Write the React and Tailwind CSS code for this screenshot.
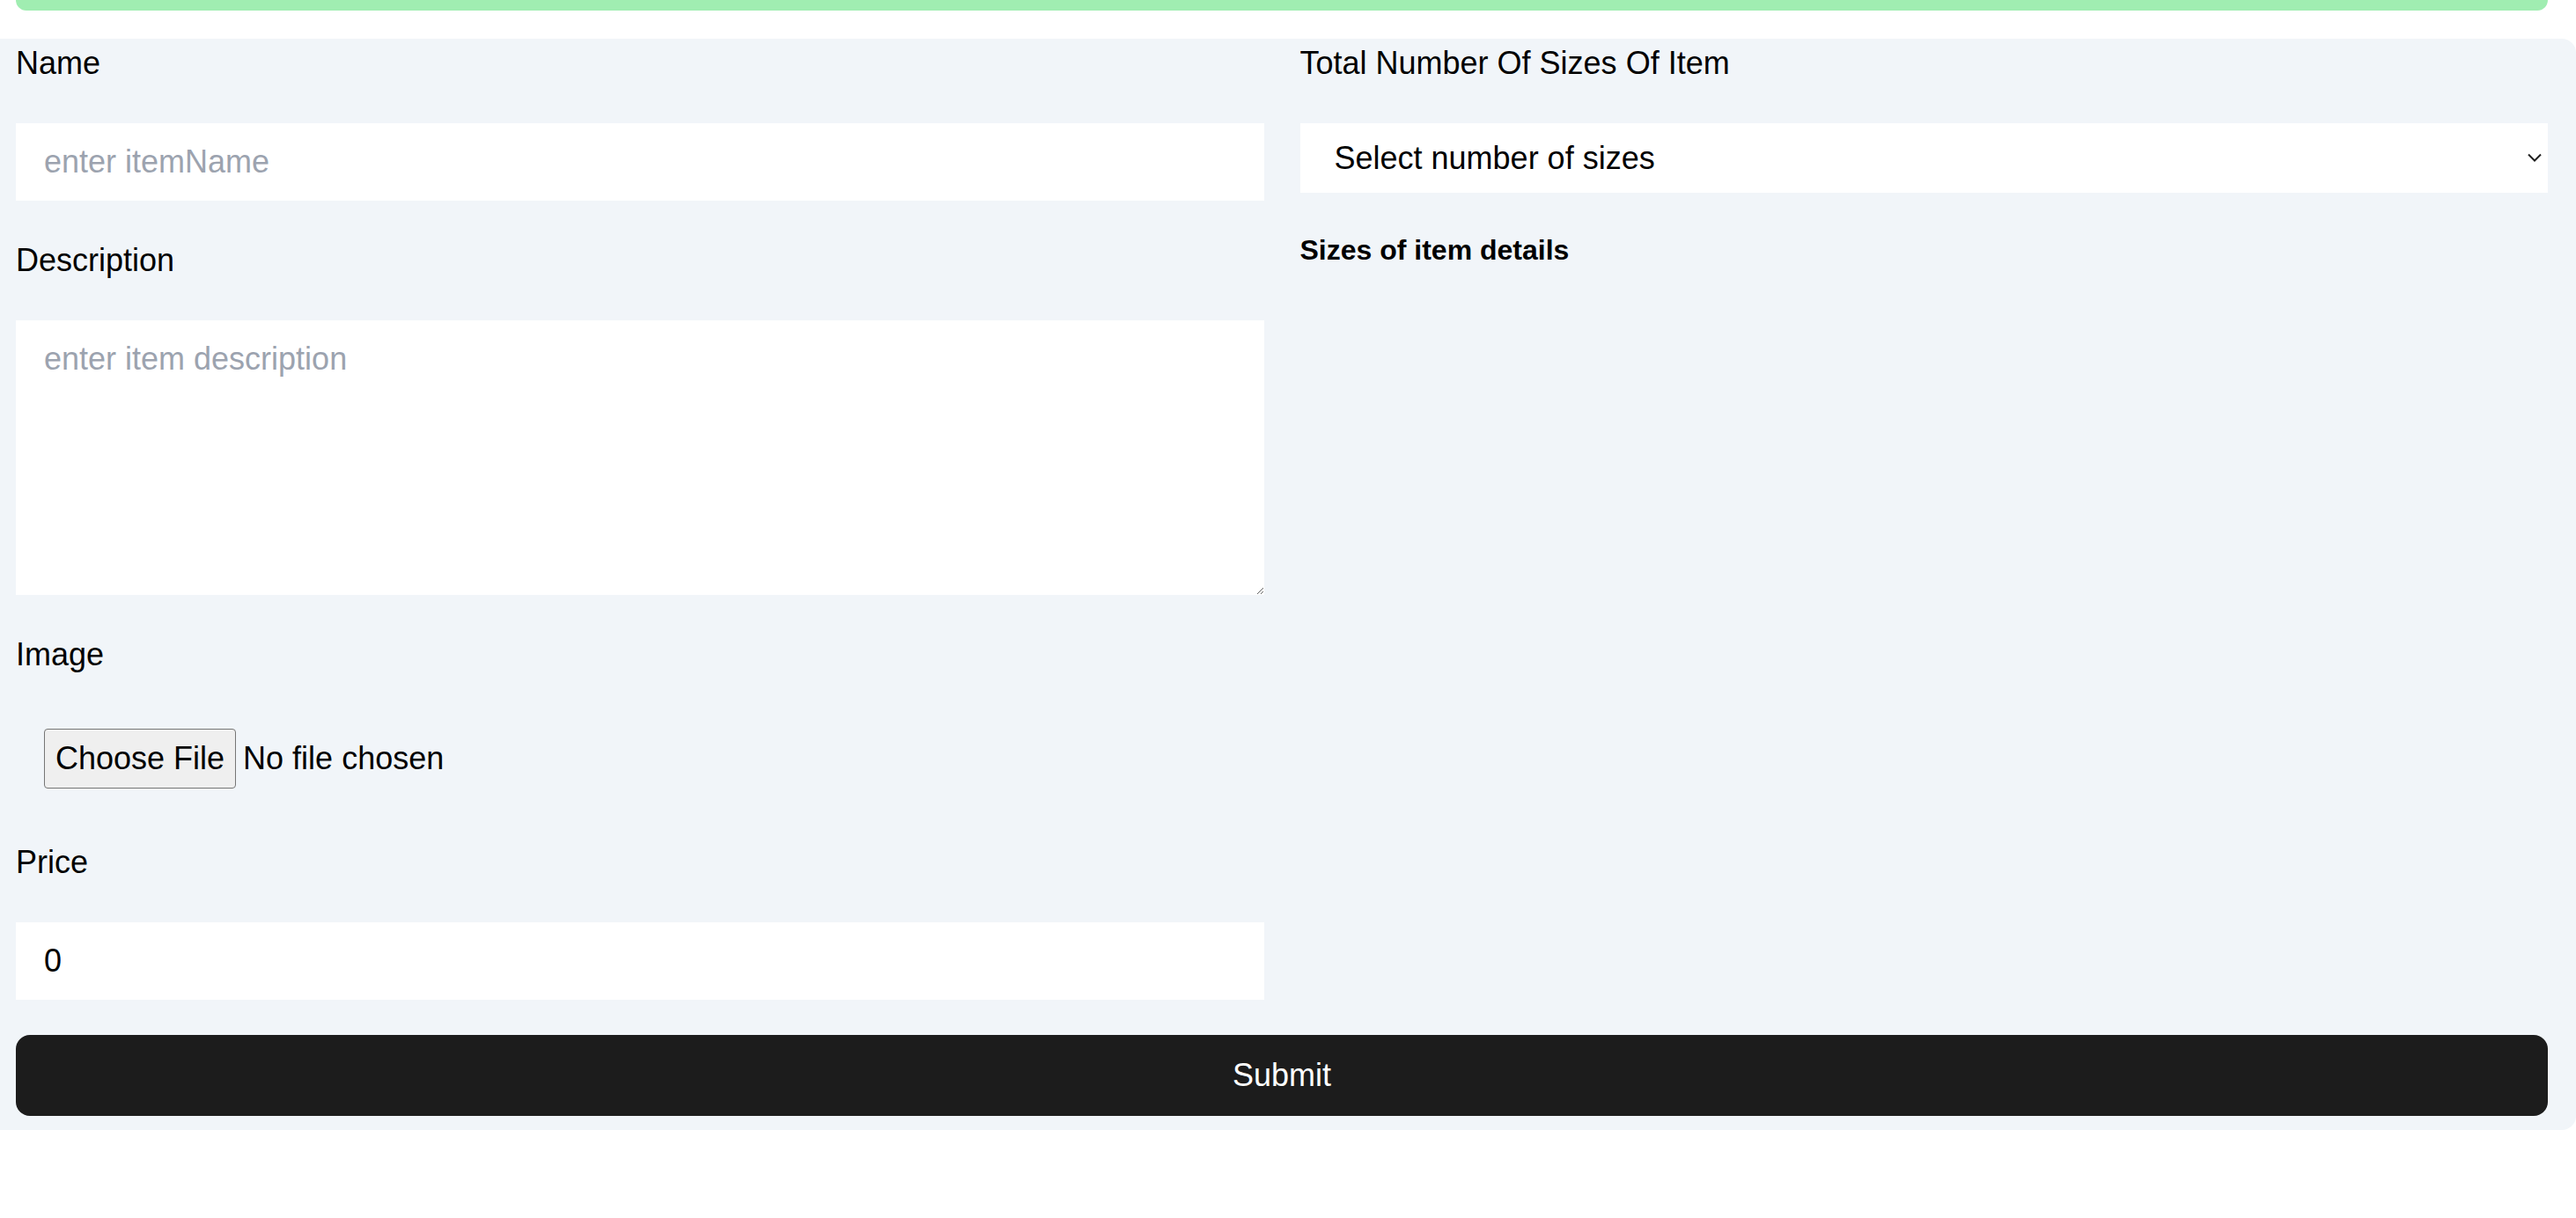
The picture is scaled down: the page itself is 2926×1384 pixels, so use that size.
import React from 'react';

const Field = ({ label, children, className = '' }) => {
    return (
        <div className={className}>
            <label className="block text-[36px] leading-[56px] text-black">{label}</label>
            <div className="mt-[40px]">{children}</div>
        </div>
    );
};

const App = () => {
    return (
        <div className="min-h-screen bg-white font-['Liberation_Sans',Arial,sans-serif]">
            {/* top progress bar */}
            <div className="ml-[18px] mr-[32px] h-[12px] rounded-b-[16px] bg-[#a0edb1]"></div>

            <form className="mt-[32px] rounded-r-[16px] bg-[#f1f5f9] pl-[18px] pr-[32px] pb-[16px]">
                <div className="grid grid-cols-2 gap-x-[41px]">
                    {/* left column */}
                    <div className="flex flex-col gap-[40px]">
                        <Field label="Name">
                            <input
                                type="text"
                                placeholder="enter itemName"
                                className="block h-[88px] w-full bg-white px-[32px] text-[36px] leading-[56px] text-black outline-none placeholder:text-[#9ca3af]"
                            />
                        </Field>

                        <Field label="Description">
                            <textarea
                                placeholder="enter item description"
                                className="block h-[312px] w-full bg-white px-[32px] py-[16px] text-[36px] leading-[56px] text-black outline-none placeholder:text-[#9ca3af]"
                            ></textarea>
                        </Field>

                        <Field label="Image">
                            <div className="px-[32px] py-[16px]">
                                <input
                                    type="file"
                                    className="block h-[68px] text-[36px] leading-[68px] text-black file:mr-[8px] file:h-[68px] file:cursor-pointer file:rounded-[4px] file:border file:border-solid file:border-[#767676] file:bg-[#efefef] file:px-[12px] file:text-[36px] file:leading-[42px] file:text-black"
                                />
                            </div>
                        </Field>

                        <Field label="Price">
                            <input
                                type="number"
                                defaultValue={0}
                                className="block h-[88px] w-full bg-white px-[32px] text-[36px] leading-[56px] text-black outline-none"
                            />
                        </Field>
                    </div>

                    {/* right column */}
                    <div>
                        <Field label="Total Number Of Sizes Of Item">
                            <div className="relative">
                                <select
                                    defaultValue=""
                                    className="block h-[79px] w-full appearance-none bg-white pl-[39px] pr-[48px] text-[36px] text-black outline-none"
                                >
                                    <option value="" disabled>Select number of sizes</option>
                                    <option value="1">1</option>
                                    <option value="2">2</option>
                                    <option value="3">3</option>
                                    <option value="4">4</option>
                                    <option value="5">5</option>
                                </select>
                                <svg
                                    className="pointer-events-none absolute right-[7px] top-[34px] h-[10px] w-[16px]"
                                    viewBox="0 0 16 10"
                                    fill="none"
                                    stroke="#1f1f1f"
                                    strokeWidth="2"
                                >
                                    <path d="M1 1.5 L8 8.5 L15 1.5" />
                                </svg>
                            </div>
                        </Field>
                        <h3 className="mt-[41px] text-[32px] font-bold leading-[48px] text-black">Sizes of item details</h3>
                    </div>
                </div>

                <button
                    type="button"
                    className="mt-[40px] h-[92px] w-full rounded-[16px] bg-[#1c1c1c] text-[36px] text-white"
                >
                    Submit
                </button>
            </form>
        </div>
    );
};

export default App;
